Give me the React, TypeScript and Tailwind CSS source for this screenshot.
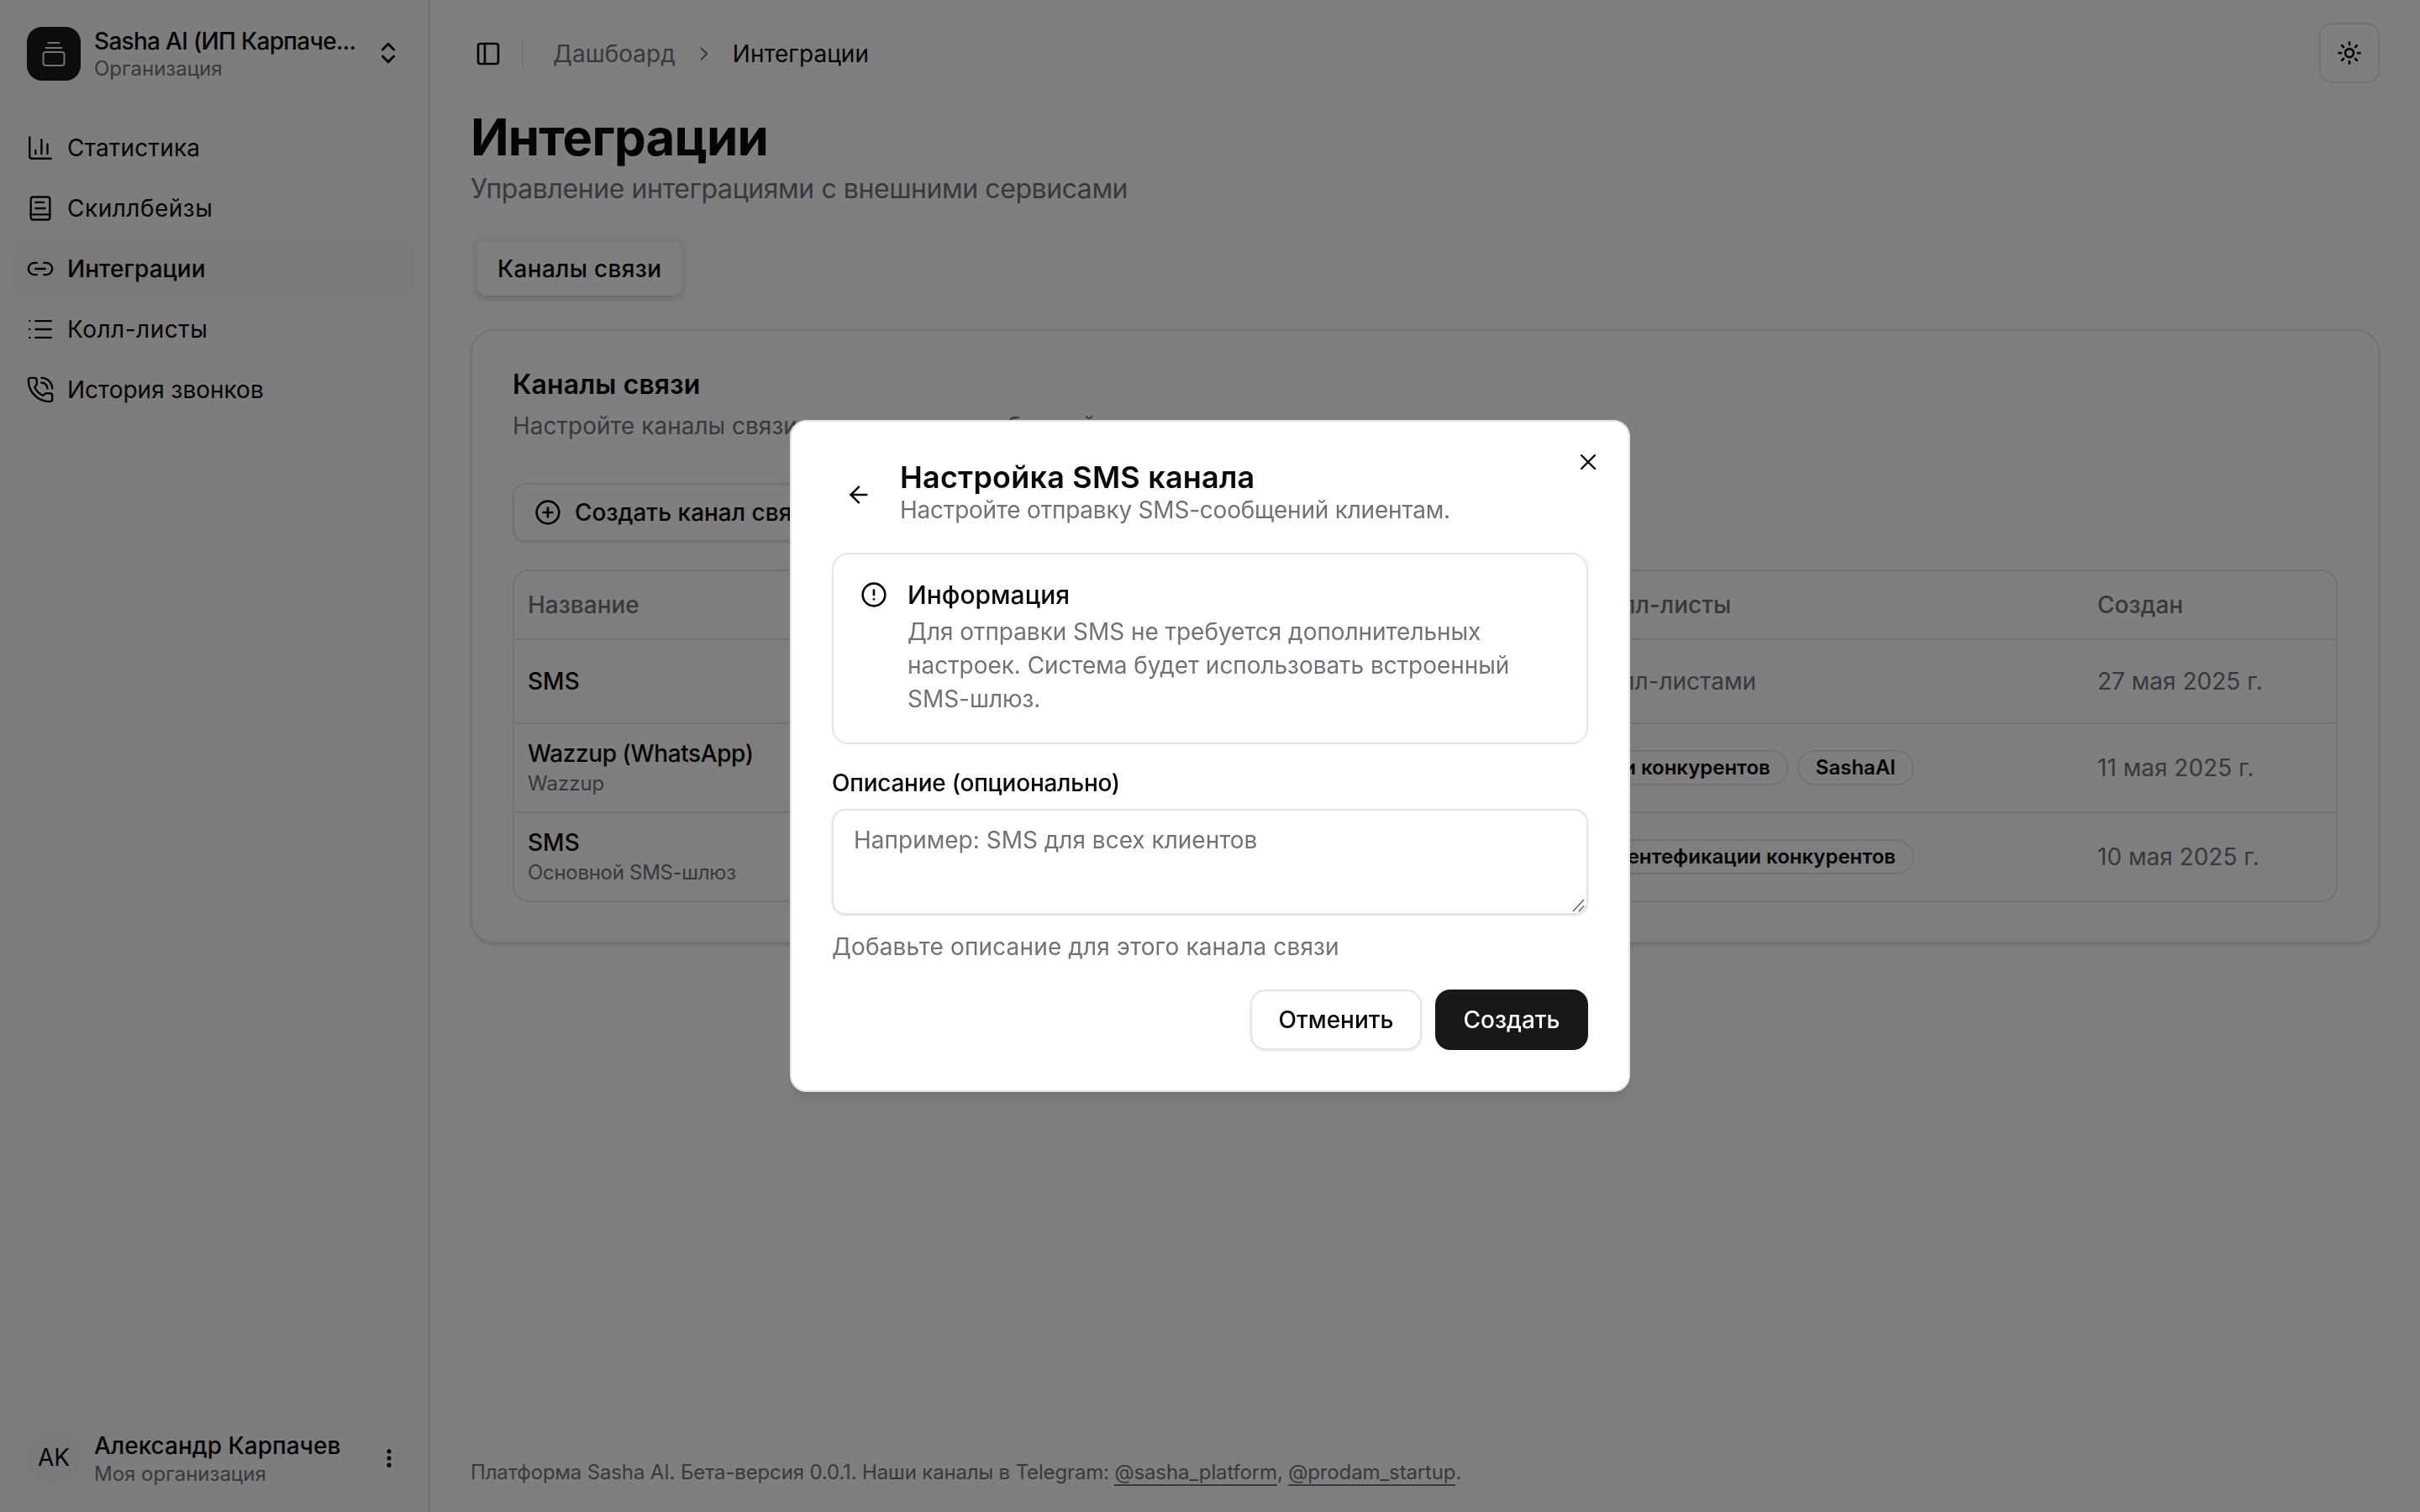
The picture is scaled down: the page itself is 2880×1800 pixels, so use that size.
import React from 'react'
import {
  ArrowLeft,
  ChartColumn,
  ChevronRight,
  ChevronsUpDown,
  CircleAlert,
  CirclePlus,
  EllipsisVertical,
  Link2,
  List,
  PanelLeft,
  PhoneCall,
  Sun,
  X,
} from 'lucide-react'

function BookIcon({ size, strokeWidth, className }: { size: number; strokeWidth: number; className?: string }) {
  return (
    <svg width={size} height={size} viewBox="0 0 24 24" fill="none" stroke="currentColor" strokeWidth={strokeWidth} strokeLinecap="round" strokeLinejoin="round" className={className}>
      <rect x="4" y="2.5" width="16" height="19" rx="2" />
      <path d="M4 17.2h16" />
      <path d="M8 7h7" />
      <path d="M8 12h8" />
    </svg>
  )
}

const navItems = [
  { label: 'Статистика', icon: ChartColumn, tracking: 'tracking-[0.2px]' },
  { label: 'Скиллбейзы', icon: BookIcon, tracking: 'tracking-[0.5px]' },
  { label: 'Интеграции', icon: Link2, active: true, tracking: '' },
  { label: 'Колл-листы', icon: List, tracking: 'tracking-[0.5px]' },
  { label: 'История звонков', icon: PhoneCall, tracking: '' },
]

const rowClass = 'grid grid-cols-[1279px_586px_1fr] items-center border-t-2 border-[#e4e4e7]'

function Pill({ children }: { children: React.ReactNode }) {
  return (
    <span className="shrink-0 h-[42px] px-[20px] flex items-center rounded-full border-2 border-[#e4e4e7] text-[24px] font-semibold whitespace-nowrap">
      {children}
    </span>
  )
}

function Sidebar() {
  return (
    <aside className="w-[512px] shrink-0 flex flex-col bg-[#fafafa] border-r-2 border-[#e4e4e7] pt-8">
      <div className="flex items-center px-8 gap-4">
        <div className="w-16 h-16 shrink-0 rounded-[18px] bg-[#18181b] flex items-center justify-center">
          <svg width="32" height="32" viewBox="0 0 32 32" fill="none" stroke="#e4e4e7" strokeWidth="2" strokeLinecap="round">
            <rect x="3.5" y="14" width="25" height="16" rx="3" />
            <path d="M6.5 9h19" />
            <path d="M9.5 3h13" />
          </svg>
        </div>
        <div className="w-[316px] min-w-0">
          <div className="text-[28px] leading-[34px] font-medium whitespace-nowrap tracking-[-0.7px]">Sasha AI (ИП Карпаче...</div>
          <div className="mt-[1px] -mb-[1px] text-[24px] leading-[30px] text-[#71717a]">Организация</div>
        </div>
        <ChevronsUpDown size={32} strokeWidth={2.2} className="ml-[2px] shrink-0 -mt-[2px]" />
      </div>

      <nav className="mt-12 px-4 flex flex-col gap-2">
        {navItems.map((item) => {
          const Icon = item.icon
          return (
            <div
              key={item.label}
              className={`h-16 pl-[15px] flex items-center gap-[15px] rounded-[16px] text-[28px] ${item.tracking} ${item.active ? 'bg-[#f4f4f5] font-medium' : ''}`}
            >
              <Icon size={34} strokeWidth={1.7} className="shrink-0" />
              {item.label}
            </div>
          )
        })}
      </nav>

      <div className="mt-auto px-8 pb-[29px] flex items-start gap-4">
        <div className="w-16 h-16 shrink-0 rounded-full bg-[#f4f4f5] flex items-center justify-center text-[28px]">AK</div>
        <div className="w-[316px]">
          <div className="text-[28px] leading-[36px] font-medium">Александр Карпачев</div>
          <div className="text-[24px] leading-[32px] text-[#71717a]">Моя организация</div>
        </div>
        <EllipsisVertical size={28} strokeWidth={2.4} className="shrink-0 ml-[5px] mt-[19px]" />
      </div>
    </aside>
  )
}

function ChannelsTable() {
  return (
    <div className="mt-[33px] rounded-[20px] border-2 border-[#e4e4e7] text-[28px]">
      <div className="grid grid-cols-[1279px_586px_1fr] items-center h-[80px] font-medium text-[#71717a]">
        <div className="pl-4">Название</div>
        <div className="pl-[4px]">Колл-листы</div>
        <div className="pl-[19px]">Создан</div>
      </div>
      <div className={`${rowClass} h-[100px]`}>
        <div className="pl-4 font-medium">SMS</div>
        <div className="flex justify-end pr-[387px] text-[#71717a] whitespace-nowrap">Все колл-листами</div>
        <div className="pl-[19px] text-[#71717a]">27 мая 2025 г.</div>
      </div>
      <div className={`${rowClass} h-[106px]`}>
        <div className="pl-4">
          <div className="font-medium leading-[36px] tracking-[-0.4px]">Wazzup (WhatsApp)</div>
          <div className="text-[24px] leading-[32px] text-[#71717a] mt-[2px]">Wazzup</div>
        </div>
        <div className="flex justify-end gap-[10px] pr-[199px] -mt-[1px]">
          <Pill>Скрипт идентефикации конкурентов</Pill>
          <Pill>SashaAI</Pill>
        </div>
        <div className="pl-[19px] text-[#71717a]">11 мая 2025 г.</div>
      </div>
      <div className={`${rowClass} h-[106px]`}>
        <div className="pl-4">
          <div className="font-medium leading-[36px]">SMS</div>
          <div className="text-[24px] leading-[32px] text-[#71717a] mt-[2px] tracking-[-0.3px]">Основной SMS-шлюз</div>
        </div>
        <div className="flex justify-end pr-[199px] -mt-[1px]">
          <Pill>Скрипт идентефикации конкурентов</Pill>
        </div>
        <div className="pl-[19px] text-[#71717a]">10 мая 2025 г.</div>
      </div>
    </div>
  )
}

function Main() {
  return (
    <main className="flex-1 min-w-0 flex flex-col bg-white">
      <header className="h-[128px] shrink-0 flex items-center pl-[53px] pr-12">
        <PanelLeft size={32} strokeWidth={2} />
        <div className="w-[2px] h-8 bg-[#e4e4e7] ml-[24px] mr-[35px]" />
        <span className="text-[28px] text-[#71717a]">Дашбоард</span>
        <ChevronRight size={26} strokeWidth={1.8} className="mx-[21px] text-[#71717a]" />
        <span className="text-[28px]">Интеграции</span>
        <button className="ml-auto -mt-[2px] w-[72px] h-[72px] rounded-[16px] border-2 border-[#e4e4e7] flex items-center justify-center">
          <Sun size={30} strokeWidth={2.2} />
        </button>
      </header>

      <div className="px-12 flex flex-col flex-1">
        <h1 className="-mt-[1px] text-[60px] leading-[72px] font-bold tracking-[-0.9px]">Интеграции</h1>
        <p className="mt-[4px] text-[32px] leading-[44px] text-[#71717a] tracking-[-0.43px]">Управление интеграциями с внешними сервисами</p>

        <div className="mt-[33px] ml-[1px] self-start p-[7px] rounded-[16px] bg-[#f4f4f5]">
          <div className="h-[65px] px-[24px] flex items-center rounded-[12px] bg-white text-[28px] font-medium shadow-md tracking-[0.3px]">Каналы связи</div>
        </div>

        <section className="mt-[33px] rounded-[28px] border-2 border-[#e4e4e7] bg-white shadow-md px-12 pt-[48px] pb-[47px]">
          <h2 className="text-[32px] leading-[32px] font-semibold tracking-[0.1px]">Каналы связи</h2>
          <p className="mt-[13px] text-[28px] leading-[40px] text-[#71717a]">Настройте каналы связи для отправки сообщений клиентам</p>
          <button className="mt-[48px] h-[70px] px-6 flex items-center gap-[16px] rounded-[16px] border-2 border-[#e4e4e7] text-[28px] font-medium shadow-sm">
            <CirclePlus size={32} strokeWidth={2} />
            Создать канал связи
          </button>
          <ChannelsTable />
        </section>

        <footer className="mt-auto pb-[31px] text-[24px] leading-[32px] text-[#71717a] tracking-[-0.15px]">
          Платформа Sasha AI. Бета-версия 0.0.1. Наши каналы в Telegram:{' '}
          <a className="border-b-2 border-[#71717a]">@sasha_platform</a>,{' '}
          <a className="border-b-2 border-[#71717a]">@prodam_startup</a>.
        </footer>
      </div>
    </main>
  )
}

function SmsDialog() {
  return (
    <div className="fixed inset-0 bg-black/50 flex items-center justify-center">
      <div className="relative w-[1000px] rounded-[20px] bg-white border-2 border-[#e4e4e7] shadow-lg px-12 pt-[46px] pb-[48px]">
        <button className="absolute top-[32px] right-[32px] w-8 h-8 flex items-center justify-center">
          <X size={32} strokeWidth={1.8} />
        </button>

        <div className="flex items-center">
          <div className="w-[64px] mr-[17px] flex justify-center mt-[3px]">
            <ArrowLeft size={32} strokeWidth={1.9} />
          </div>
          <div>
            <h2 className="text-[36px] leading-[40px] font-semibold tracking-[0.2px]">Настройка SMS канала</h2>
            <p className="-mt-[1px] text-[28px] leading-[40px] text-[#71717a] tracking-[-0.22px]">Настройте отправку SMS-сообщений клиентам.</p>
          </div>
        </div>

        <div className="mt-[31px] rounded-[20px] border-2 border-[#e4e4e7] pl-[32px] pr-[32px] pt-[28px] pb-[31px] flex gap-[24px]">
          <CircleAlert size={32} strokeWidth={2} className="shrink-0 mt-1" />
          <div>
            <div className="text-[30px] leading-[40px] font-medium">Информация</div>
            <div className="mt-[4px] pb-[1px] text-[28px] leading-[40px] text-[#71717a] tracking-[-0.05px]">
              Для отправки SMS не требуется дополнительных настроек. Система будет использовать встроенный SMS-шлюз.
            </div>
          </div>
        </div>

        <label className="block mt-[26px] text-[28px] leading-[40px] font-medium tracking-[-0.25px]">Описание (опционально)</label>
        <div className="relative mt-[11px]">
          <textarea
            placeholder="Например: SMS для всех клиентов"
            className="block w-full h-[126px] resize-none rounded-[16px] border-2 border-[#e4e4e7] px-6 pt-[15px] text-[28px] leading-[40px] shadow-sm outline-none placeholder:text-[#71717a]"
          />
          <svg width="16" height="16" viewBox="0 0 16 16" fill="none" stroke="#52525b" strokeWidth="1.2" className="absolute right-[3px] bottom-[3px]">
            <path d="M1 15 14 1" />
            <path d="M8 15 14 8.5" />
          </svg>
        </div>
        <p className="mt-[18px] text-[28px] leading-[40px] text-[#71717a] tracking-[0.14px]">Добавьте описание для этого канала связи</p>

        <div className="mt-[31px] flex justify-end gap-[16px]">
          <button className="h-[72px] w-[204px] rounded-[18px] border-2 border-[#e4e4e7] text-[28px] font-medium shadow-sm">Отменить</button>
          <button className="h-[72px] w-[182px] rounded-[18px] bg-[#18181b] text-white text-[28px] font-medium">Создать</button>
        </div>
      </div>
    </div>
  )
}

export default function App() {
  return (
    <div className="h-[1800px] flex overflow-hidden font-[Inter,'Liberation_Sans',sans-serif] text-[#09090b] antialiased">
      <Sidebar />
      <Main />
      <SmsDialog />
    </div>
  )
}
